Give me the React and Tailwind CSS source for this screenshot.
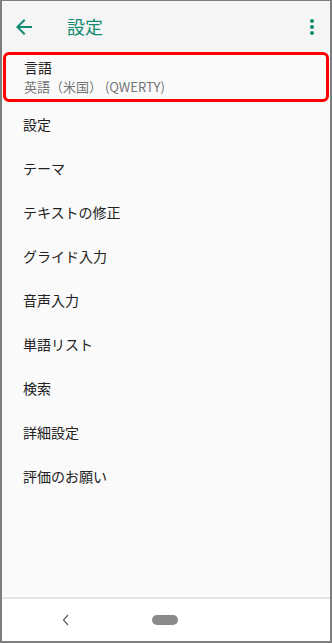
import React from "react";

const items = [
    "設定",
    "テーマ",
    "テキストの修正",
    "グライド入力",
    "音声入力",
    "単語リスト",
    "検索",
    "詳細設定",
    "評価のお願い",
];

const font = { fontFamily: '"Noto Sans CJK JP", "Noto Sans", Roboto, sans-serif' };

export default function App() {
    return (
        <div
            className="w-[332px] h-[643px] flex flex-col bg-[#fafafa] border border-[#7d7d7d] border-l-2 border-r-2 border-b-2 overflow-hidden"
            style={font}
        >
            {/* Top app bar */}
            <div className="h-[51px] shrink-0 flex items-center bg-[#f5f5f5]">
                <svg width="24" height="24" viewBox="0 0 24 24" className="ml-[10px]">
                    <path
                        d="M20 11H7.83l5.59-5.59L12 4l-8 8 8 8 1.41-1.41L7.83 13H20v-2z"
                        fill="#138a72"
                    />
                </svg>
                <span className="ml-[31px] text-[18px] text-[#138a72]">設定</span>
                <div className="ml-auto mr-[16px] flex flex-col gap-[2px]">
                    <span className="w-[4px] h-[4px] rounded-full bg-[#138a72]" />
                    <span className="w-[4px] h-[4px] rounded-full bg-[#138a72]" />
                    <span className="w-[4px] h-[4px] rounded-full bg-[#138a72]" />
                </div>
            </div>

            {/* Settings list */}
            <div className="flex-1 flex flex-col">
                <div className="h-[50px] mx-[1px] border-[3px] border-[#ff0000] rounded-[6px] flex flex-col justify-center pl-[18px]">
                    <span className="text-[14px] leading-[19px] text-[#212121]">言語</span>
                    <span className="text-[13px] leading-[19px] text-[#757575]">英語（米国） (QWERTY)</span>
                </div>
                {items.map((label) => (
                    <div key={label} className="h-[44px] flex items-center pl-[21px] -mt-0 first:-mt-[2px]">
                        <span className="text-[14px] text-[#212121]">{label}</span>
                    </div>
                ))}
            </div>

            {/* Navigation bar */}
            <div className="h-[44px] shrink-0 border-t-2 border-[#e6e6e6] bg-white flex items-center">
                <svg width="10" height="12" viewBox="0 0 10 12" className="ml-[59px]">
                    <path d="M7 1 L2.5 6 L7 11" stroke="#666" strokeWidth="1.3" fill="none" />
                </svg>
                <span className="ml-[81px] w-[26px] h-[10px] rounded-full bg-[#8a8a8a]" />
            </div>
        </div>
    );
}
